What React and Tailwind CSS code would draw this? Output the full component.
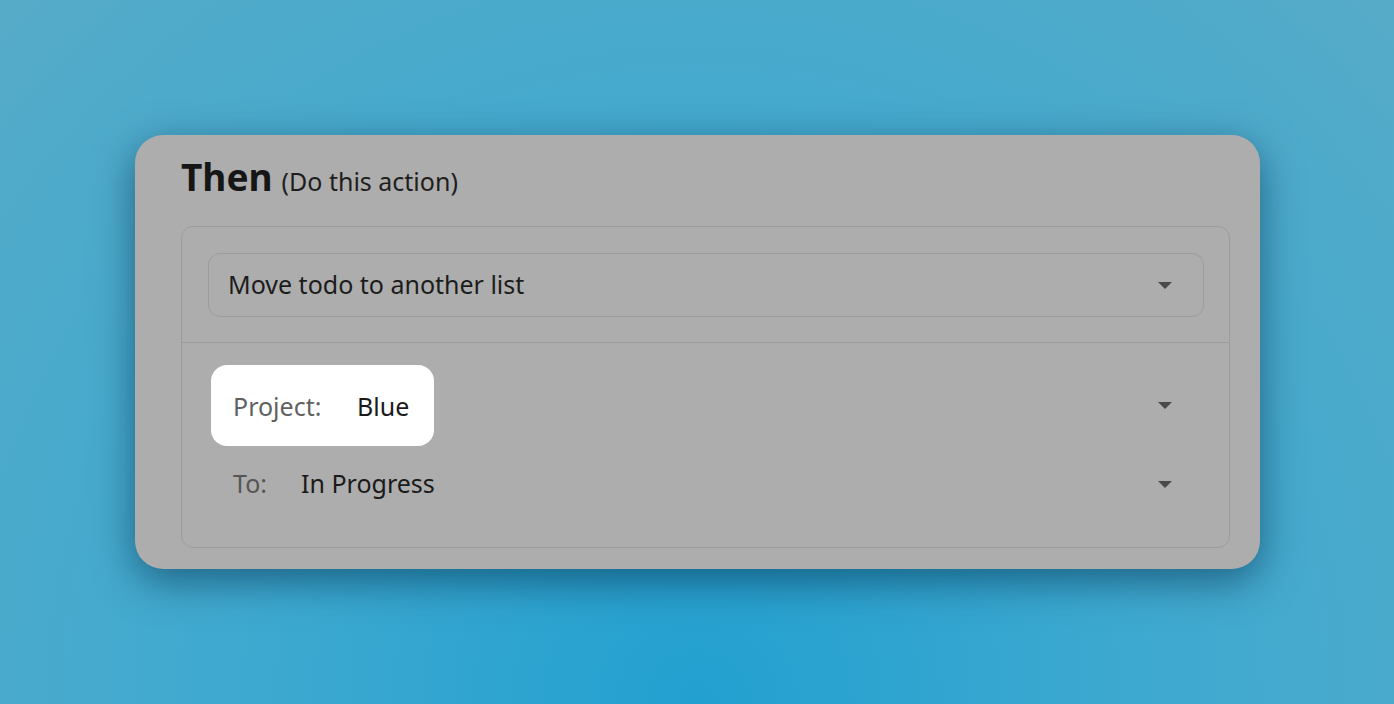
import React from "react";

const Caret = () => (
  <svg width="16" height="9" viewBox="0 0 16 9" className="shrink-0">
    <path d="M1 1h14L8 8z" fill="#4a4a4a" />
  </svg>
);

const App = () => {
  return (
    <div
      className="w-[1394px] h-[704px] flex items-start pl-[135px] pt-[135px] bg-[radial-gradient(ellipse_at_50%_100%,#22a0d0_0%,#3ea9d0_45%,#56abc8_100%)]"
      style={{ fontFamily: '"Noto Sans", "Open Sans", sans-serif' }}
    >
      <div className="w-[1125px] h-[434px] rounded-[28px] bg-[#adadad] shadow-[0_12px_40px_rgba(0,40,70,0.55)] pl-[46px] pr-[30px] flex flex-col">
        <div className="h-[91px] pt-[16px] flex items-baseline gap-[9px]">
          <span className="text-[37px] leading-[52px] font-bold text-[#161616]">Then</span>
          <span className="text-[25px] text-[#1e1e1e]">(Do this action)</span>
        </div>
        <div className="h-[322px] border border-[#9c9c9c] rounded-[12px] flex flex-col">
          <div className="pl-[26px] pr-[25px] pt-[26px] pb-[25px] border-b border-[#9c9c9c]">
            <div className="h-[64px] border border-[#9c9c9c] rounded-[12px] flex items-center justify-between pl-[19px] pr-[30px]">
              <span className="text-[25px] text-[#1c1c1c]">Move todo to another list</span>
              <Caret />
            </div>
          </div>
          <div className="flex flex-col pl-[29px] pr-[56px] pt-[22px]">
            <div className="flex items-center justify-between">
              <div className="h-[81px] w-[223px] bg-white rounded-[16px] flex items-center pl-[22px] pt-[2px]">
                <span className="text-[25px] text-[#616161] w-[124px]">Project:</span>
                <span className="text-[25px] text-[#1a1a1a]">Blue</span>
              </div>
              <Caret />
            </div>
            <div className="flex items-center justify-between h-[76px] pl-[22px]">
              <div className="flex items-center">
                <span className="text-[25px] text-[#555] w-[68px]">To:</span>
                <span className="text-[25px] text-[#1a1a1a]">In Progress</span>
              </div>
              <Caret />
            </div>
          </div>
        </div>
      </div>
    </div>
  );
};

export default App;
